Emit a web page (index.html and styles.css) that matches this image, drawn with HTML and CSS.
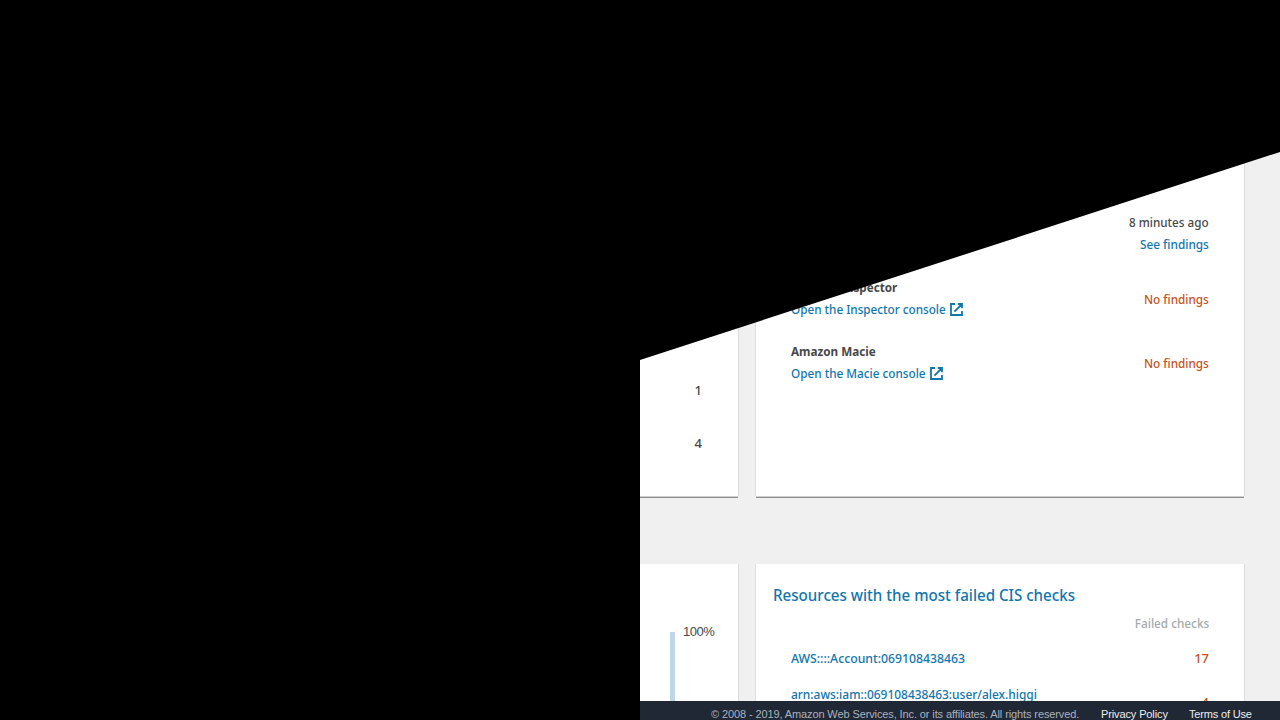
FILE: index.html
```html
<!DOCTYPE html>
<html lang="en">
<head>
<meta charset="utf-8">
<title>Security Hub</title>
<link rel="stylesheet" href="styles.css">
</head>
<body>
<svg class="symbols" aria-hidden="true"><symbol id="external" viewBox="0 0 13 13"><path d="M5 1H1v11h11V8M7.8 1H12v4.2M12 1L4.4 8.6" fill="none" stroke="currentColor" stroke-width="1.8"/></symbol></svg>
<div class="screen">
  <main class="dashboard">
    <section class="card counts">
      <div class="count">1</div>
      <div class="count">4</div>
    </section>
    <section class="card providers">
      <div class="provider recent">
        <div class="status"><span class="end t-ago">8 minutes ago</span><a class="link"><span class="end t-see">See findings</span></a></div>
      </div>
      <div class="provider">
        <div><b class="start t-name">Amazon Inspector</b><a class="link"><span class="start t-open-inspector">Open the Inspector console</span><svg class="icon"><use href="#external"/></svg></a></div>
        <span class="warning end t-none">No findings</span>
      </div>
      <div class="provider">
        <div><b class="start t-name">Amazon Macie</b><a class="link"><span class="start t-open-macie">Open the Macie console</span><svg class="icon"><use href="#external"/></svg></a></div>
        <span class="warning end t-none">No findings</span>
      </div>
    </section>
    <section class="card chart">
      <div class="bar"></div>
      <div class="percent">100%</div>
    </section>
    <section class="card resources">
      <h2><a class="link"><span class="start t-title">Resources with the most failed CIS checks</span></a></h2>
      <div class="column-label"><span class="end t-failed">Failed checks</span></div>
      <div class="resource"><a class="link"><span class="start t-account">AWS::::Account:069108438463</span></a><span class="warning">17</span></div>
      <div class="resource second"><a class="link"><span class="start t-arn">arn:aws:iam::069108438463:user/alex.higgi</span></a><span class="warning">4</span></div>
    </section>
  </main>
  <footer class="footer">
    <span class="copyright">© 2008 - 2019, Amazon Web Services, Inc. or its affiliates. All rights reserved.</span>
    <a class="privacy">Privacy Policy</a>
    <a class="terms">Terms of Use</a>
  </footer>
  <div class="cover"></div>
</div>
</body>
</html>
```
FILE: styles.css
```css
* { box-sizing: border-box; }
body { margin: 0; background: #000; }
.symbols { display: none; }
.screen {
  position: relative;
  width: 1280px;
  height: 720px;
  overflow: hidden;
  background: #f0f0f0;
  color: #484848;
  font: 500 13px/22px "Noto Sans", "Open Sans", sans-serif;
}
.dashboard {
  display: grid;
  grid-template-columns: 98px 488px;
  grid-template-rows: 376px 200px;
  column-gap: 18px;
  row-gap: 68px;
  padding: 120px 0 0 640px;
}
.card {
  background: #fff;
  box-shadow: 1px 0 0 #dcdcdc, -1px 0 0 #dfdfdf;
}
.counts, .providers {
  box-shadow: 0 1px 0 #cfcfcf, 0 2px 0 #8d8d8d, 1px 0 0 #dcdcdc, -1px 0 0 #dfdfdf;
}
.counts { padding: 259px 36px 0 0; text-align: right; }
.count { height: 53px; }
.providers { padding: 91px 35px 0 35px; display: flex; flex-direction: column; gap: 20px; }
.provider { display: flex; justify-content: space-between; align-items: center; height: 44px; }
.recent { justify-content: flex-end; }
.recent + .provider { margin-top: 1px; }
.status { display: flex; flex-direction: column; align-items: flex-end; }
b { display: block; }
.link { display: flex; align-items: center; color: #1176ad; white-space: nowrap; }
.icon { width: 13px; height: 13px; margin-left: 4px; }
.warning { color: #c4531f; white-space: nowrap; }
.provider .warning { padding-top: 2px; }

/* Condensed text */
.start, .end { display: inline-block; white-space: nowrap; }
.start { transform-origin: left center; }
.end { transform-origin: right center; }
.t-ago { transform: scaleX(.898); }
.t-see { transform: scaleX(.908); }
.t-none { transform: scaleX(.903); }
.t-name { transform: scaleX(.9); }
.t-open-inspector { width: 155px; transform: scaleX(.901); }
.t-open-macie { width: 135px; transform: scaleX(.903); }
.t-title { transform: scaleX(.945); }
.t-failed { transform: scaleX(.905); }
.t-account { transform: scaleX(.942); }
.t-arn { transform: scaleX(.918); }

.chart { display: flex; align-items: flex-start; padding: 68px 0 0 30px; }
.bar { width: 5px; height: 120px; background: #c0d7ea; }
.percent { margin: -11px 0 0 8px; font: 13px/22px "Liberation Sans", Arial, sans-serif; letter-spacing: -.5px; }
.resources { padding: 20px 35px 0 17px; }
h2 { margin: 0; font: 500 16px/22px "Noto Sans", "Open Sans", sans-serif; }
.column-label { display: flex; justify-content: flex-end; margin-top: 6px; color: #a3acac; }
.resource { display: flex; justify-content: space-between; align-items: flex-start; margin-top: 13px; padding-left: 18px; }
.resource.second { margin-top: 14px; }
.second .warning { padding-top: 8px; }
.footer {
  position: absolute;
  inset: 701px 0 auto 0;
  display: flex;
  height: 19px;
  padding-left: 711px;
  background: #202735;
  color: #abb2bd;
  font: 11px/27px "Liberation Sans", Arial, sans-serif;
  white-space: nowrap;
  overflow: hidden;
}
.copyright { width: 390px; letter-spacing: -.11px; }
.privacy { width: 88px; color: #eee; letter-spacing: -.12px; }
.terms { color: #eee; letter-spacing: -.17px; }
.cover {
  position: absolute;
  inset: 0;
  background: #000;
  clip-path: polygon(0 0, 1280px 0, 1280px 152px, 640px 360px, 640px 720px, 0 720px);
}
```
